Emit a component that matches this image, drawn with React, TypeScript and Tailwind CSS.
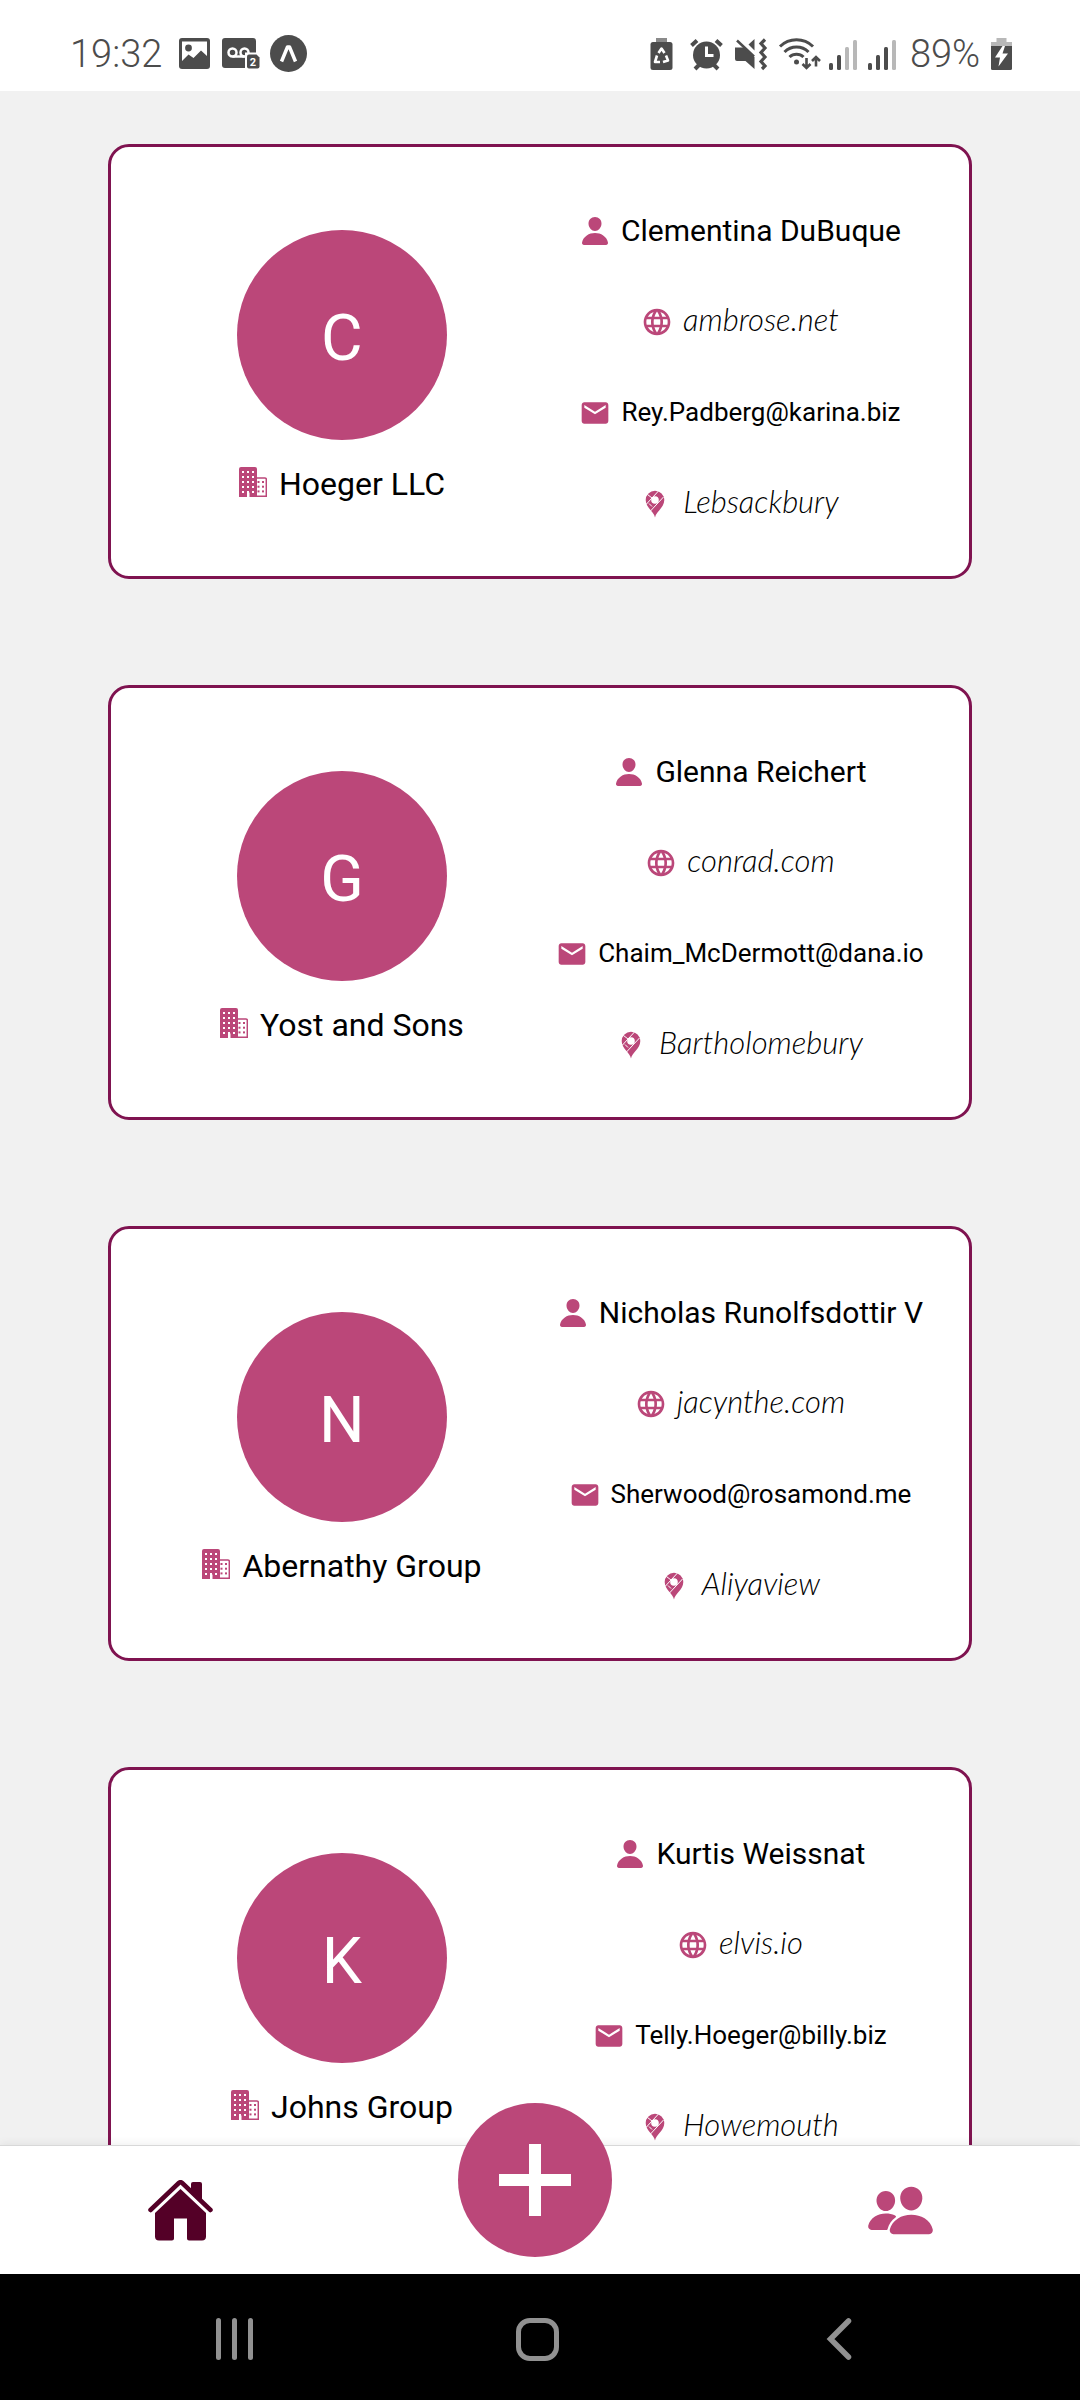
import React from "react";
import { MdEmail, MdLanguage } from "react-icons/md";
import { IoPeople, IoPerson } from "react-icons/io5";

type Contact = {
  name: string;
  company: string;
  website: string;
  email: string;
  city: string;
};

const contacts: Contact[] = [
  { name: "Clementina DuBuque", company: "Hoeger LLC", website: "ambrose.net", email: "Rey.Padberg@karina.biz", city: "Lebsackbury" },
  { name: "Glenna Reichert", company: "Yost and Sons", website: "conrad.com", email: "Chaim_McDermott@dana.io", city: "Bartholomebury" },
  { name: "Nicholas Runolfsdottir V", company: "Abernathy Group", website: "jacynthe.com", email: "Sherwood@rosamond.me", city: "Aliyaview" },
  { name: "Kurtis Weissnat", company: "Johns Group", website: "elvis.io", email: "Telly.Hoeger@billy.biz", city: "Howemouth" },
];

const SCRIPT = "pb-1 font-['Lato',sans-serif] text-[31px] font-light italic";

function BuildingIcon() {
  const tall = [];
  for (let r = 0; r < 5; r++) for (let c = 0; c < 3; c++) tall.push([3 + c * 5, 4 + r * 5]);
  const small = [];
  for (let r = 0; r < 3; r++) for (let c = 0; c < 2; c++) small.push([18.5 + c * 4.5, 14 + r * 4.7]);
  return (
    <svg width="28" height="34" viewBox="0 0 28 34" className="shrink-0" aria-hidden="true">
      <path d="M2 0H16a2 2 0 0 1 2 2V30H10.500V25.500H8V30H0V2a2 2 0 0 1 2-2Z" fill="#bb4779" />
      <path d="M17.500 11H26a1.300 1.300 0 0 1 1.300 1.300V29.300H17.500" fill="none" stroke="#bb4779" strokeWidth="1.500" />
      {tall.map(([x, y]) => (
        <rect key={`${x}-${y}`} x={x} y={y} width="2" height="2" fill="#fff" />
      ))}
      {small.map(([x, y]) => (
        <rect key={`${x}-${y}`} x={x} y={y} width="2" height="2" fill="#bb4779" />
      ))}
    </svg>
  );
}

function PinIcon() {
  return (
    <svg width="32" height="32" viewBox="0 0 32 32" className="shrink-0" aria-hidden="true">
      <path d="M14 29.500C13.200 24 4.700 19.500 4.700 12a9.300 9.300 0 0 1 18.600 0C23.300 19.500 14.800 24 14 29.500Z" fill="#bb4779" />
      <path d="M5 16.500 17.500 3M9 23.500 22.500 9M6.500 6.500 11 10M8 15.500l3 3" stroke="#fff" strokeWidth="1" />
      <circle cx="14" cy="12" r="3.800" fill="#fff" />
    </svg>
  );
}

function HouseIcon() {
  return (
    <svg width="65" height="61" viewBox="0 0 65 61" aria-hidden="true" fill="#540027">
      <path d="M43 12V4a2 2 0 0 1 2-2h7a2 2 0 0 1 2 2V22Z" />
      <path d="M2.500 30 30.800 3a2.500 2.500 0 0 1 3.400 0L62.500 30" fill="none" stroke="#540027" strokeWidth="4.500" strokeLinecap="round" />
      <path d="M32.500 9 58 33V56.500a4 4 0 0 1-4 4H41a2 2 0 0 1-2-2V38.500H26V58.500a2 2 0 0 1-2 2H11a4 4 0 0 1-4-4V33Z" />
    </svg>
  );
}

function SignalIcon({ level }: { level: number }) {
  return (
    <svg width="31" height="34" viewBox="0 0 31 34" aria-hidden="true">
      {[26, 18, 10, 3].map((top, i) => (
        <rect key={top} x={i * 8} y={top} width="4" height={33 - top} rx="1.500" fill={i < level ? "#4c4c4c" : "#b8b8b8"} />
      ))}
    </svg>
  );
}

function StatusBar() {
  return (
    <header className="flex h-[91px] shrink-0 items-center justify-between bg-white pt-4 pr-[68px] pl-[70px] text-[#4c4c4c]">
      <div className="flex items-center">
        <span className="mr-[17px] text-[38px] leading-none font-light">19:32</span>
        <svg className="mr-3" width="31" height="31" viewBox="0 0 31 31" aria-hidden="true">
          <rect width="31" height="31" rx="3" fill="#4c4c4c" />
          <path d="M3 3.500H28V18L22 12.500 14.500 20 9.500 16.500 3 23Z" fill="#fff" />
          <circle cx="9.500" cy="10" r="3.400" fill="#4c4c4c" />
        </svg>
        <svg className="mr-[10px]" width="38" height="31" viewBox="0 0 38 31" aria-hidden="true">
          <rect width="34" height="30" rx="3" fill="#4c4c4c" />
          <circle cx="10.500" cy="14.500" r="4" fill="none" stroke="#fff" strokeWidth="2.500" />
          <circle cx="22.500" cy="14.500" r="4" fill="none" stroke="#fff" strokeWidth="2.500" />
          <path d="M10.500 18.500h12" stroke="#fff" strokeWidth="2.500" />
          <rect x="23" y="14.500" width="15" height="17" fill="#fff" />
          <path d="M27 16.500h7.500l3 3V28.500a2 2 0 0 1-2 2H27a2 2 0 0 1-2-2v-10a2 2 0 0 1 2-2Z" fill="#4c4c4c" />
          <text x="31" y="27.500" textAnchor="middle" fontSize="11" fontWeight="700" fill="#fff" fontFamily="Roboto, sans-serif">2</text>
        </svg>
        <svg width="37" height="37" viewBox="0 0 37 37" aria-hidden="true">
          <circle cx="18.500" cy="18.500" r="18.500" fill="#4c4c4c" />
          <path d="M11.500 26.500 17.500 12h2L25.500 26.500" fill="none" stroke="#fff" strokeWidth="3.500" strokeLinejoin="round" />
        </svg>
      </div>
      <div className="flex items-center gap-2">
        <svg width="31" height="34" viewBox="0 0 31 34" aria-hidden="true">
          <rect x="6" y="1" width="11" height="7" fill="#8a8a8a" />
          <rect x="0.500" y="5" width="22" height="28" rx="2.500" fill="#4c4c4c" />
          <path d="M8.500 16 11.500 11.500 14.500 16M16 18.500 18 23.500 13 25M10 25H5L7 18.500" fill="none" stroke="#fff" strokeWidth="2.600" strokeLinejoin="round" />
        </svg>
        <svg width="37" height="34" viewBox="0 0 37 34" aria-hidden="true">
          <circle cx="17.500" cy="18" r="13.500" fill="#4c4c4c" />
          <path d="M2.500 8.500 8 3.500M27 3.500 32.500 8.500M6 32l4-4M29 32l-4-4" stroke="#4c4c4c" strokeWidth="4" />
          <path d="M17.500 9.500V18.500H24.500" fill="none" stroke="#fff" strokeWidth="3" />
        </svg>
        <svg width="36" height="34" viewBox="0 0 36 34" aria-hidden="true" fill="#4c4c4c">
          <path d="M1 10.500H9.500L20.500 20V32L11.500 24H3a2 2 0 0 1-2-2Z" />
          <path d="M14.500 7.500 20.500 2V13.500Z" />
          <path d="M3 3.500 20 19.500" stroke="#4c4c4c" strokeWidth="2.500" />
          <path d="M31 2.500 27 6.500 31 11 27 15.500 31 20 27 24.500 31 29 28 32" fill="none" stroke="#4c4c4c" strokeWidth="3.200" />
        </svg>
        <svg width="43" height="34" viewBox="0 0 43 34" aria-hidden="true" fill="none" stroke="#4c4c4c" strokeWidth="3">
          <path d="M2 9.500a23.500 23.500 0 0 1 33 0M6.500 15a17 17 0 0 1 24 0M11.500 20a10 10 0 0 1 14 0" />
          <circle cx="18.500" cy="25" r="2.500" fill="#4c4c4c" stroke="none" />
          <path d="M28.500 21V30M24.500 27 28.500 31 32.500 27M38 29.500V21M34 24 38 20 42 24" strokeWidth="2.600" />
        </svg>
        <SignalIcon level={2} />
        <SignalIcon level={3} />
        <span className="w-[76px] text-center text-[38px] leading-none font-light">89%</span>
        <svg width="21" height="34" viewBox="0 0 21 34" aria-hidden="true">
          <path d="M5.500 1h10V5H21V9H0V5H5.500Z" fill="#b8b8b8" />
          <path d="M0 9H21V31.500a1.500 1.500 0 0 1-1.500 1.500H1.500A1.500 1.500 0 0 1 0 31.500Z" fill="#4c4c4c" />
          <path d="M11.500 9 4 20.500H9L7.500 29.500 17 16.500H11.500L14 9Z" fill="#fff" />
        </svg>
      </div>
    </header>
  );
}

function Row({ icon, children }: { icon: React.ReactNode; children: React.ReactNode }) {
  return (
    <li className="flex h-[91px] items-center justify-center gap-2.5 whitespace-nowrap">
      {icon}
      {children}
    </li>
  );
}

function ContactCard({ contact }: { contact: Contact }) {
  return (
    <article className="grid min-h-[435px] w-4/5 shrink-0 grid-cols-[53fr_47fr] rounded-[21px] border-3 border-[#7f1350] bg-white pr-[42px] pl-5 text-black">
      <div className="flex flex-col items-center pt-[83px]">
        <div className="flex size-[210px] items-center justify-center rounded-full bg-[#bb4779] pt-2 text-[64px] leading-none text-white">
          {contact.name[0]}
        </div>
        <div className="mt-5 flex h-12 items-center gap-3 text-[32px] whitespace-nowrap">
          <BuildingIcon />
          <span>{contact.company}</span>
        </div>
      </div>
      <ul className="pt-[38px]">
        <Row icon={<IoPerson size={32} color="#bb4779" className="shrink-0" />}>
          <h2 className="text-[30px]">{contact.name}</h2>
        </Row>
        <Row icon={<MdLanguage size={32} color="#bb4779" className="shrink-0" />}>
          <a href={`https://${contact.website}`} className={SCRIPT}>
            {contact.website}
          </a>
        </Row>
        <Row icon={<MdEmail size={32} color="#bb4779" className="shrink-0" />}>
          <a href={`mailto:${contact.email}`} className="text-[26px]">
            {contact.email}
          </a>
        </Row>
        <Row icon={<PinIcon />}>
          <span className={SCRIPT}>{contact.city}</span>
        </Row>
      </ul>
    </article>
  );
}

function TabBar() {
  return (
    <nav className="relative grid h-[129px] shrink-0 grid-cols-3 border-t border-[#d8d8d8] bg-white shadow-[0_-2px_8px_rgba(0,0,0,0.06)]">
      <button type="button" aria-label="Home" className="flex items-center justify-center">
        <HouseIcon />
      </button>
      <div className="-mt-[43px] flex items-start justify-center pr-[10px]">
        <button type="button" aria-label="Add contact" className="flex size-[154px] items-center justify-center rounded-full bg-[#bb4779]">
          <svg width="72" height="72" viewBox="0 0 72 72" aria-hidden="true">
            <path d="M36 0V72M0 36H72" stroke="#fff" strokeWidth="12" />
          </svg>
        </button>
      </div>
      <button type="button" aria-label="Contacts" className="flex items-center justify-center">
        <IoPeople size={69} color="#bb4779" />
      </button>
    </nav>
  );
}

function SystemNav() {
  return (
    <footer className="grid h-[126px] shrink-0 grid-cols-3 bg-black pt-1 pr-[90px] pl-[84px]">
      <button type="button" aria-label="Recent apps" className="flex items-center justify-center">
        <svg width="38" height="42" viewBox="0 0 38 42" aria-hidden="true" fill="#919191">
          <rect width="5" height="42" rx="2.500" />
          <rect x="16" width="5" height="42" rx="2.500" />
          <rect x="32" width="5" height="42" rx="2.500" />
        </svg>
      </button>
      <button type="button" aria-label="Home screen" className="flex items-center justify-center">
        <span className="size-[43px] rounded-[14px] border-5 border-[#919191]" />
      </button>
      <button type="button" aria-label="Back" className="flex items-center justify-center">
        <svg width="26" height="42" viewBox="0 0 26 42" aria-hidden="true">
          <path d="M22.500 3 4.500 21 22.500 39" fill="none" stroke="#919191" strokeWidth="5.500" strokeLinecap="round" />
        </svg>
      </button>
    </footer>
  );
}

export default function App() {
  return (
    <div className="flex h-screen flex-col bg-[#f1f1f1] font-['Roboto',sans-serif]">
      <StatusBar />
      <main className="flex min-h-0 flex-1 flex-col items-center gap-[106px] overflow-y-auto py-[53px] [scrollbar-width:none]">
        {contacts.map((contact) => (
          <ContactCard key={contact.name} contact={contact} />
        ))}
      </main>
      <TabBar />
      <SystemNav />
    </div>
  );
}
